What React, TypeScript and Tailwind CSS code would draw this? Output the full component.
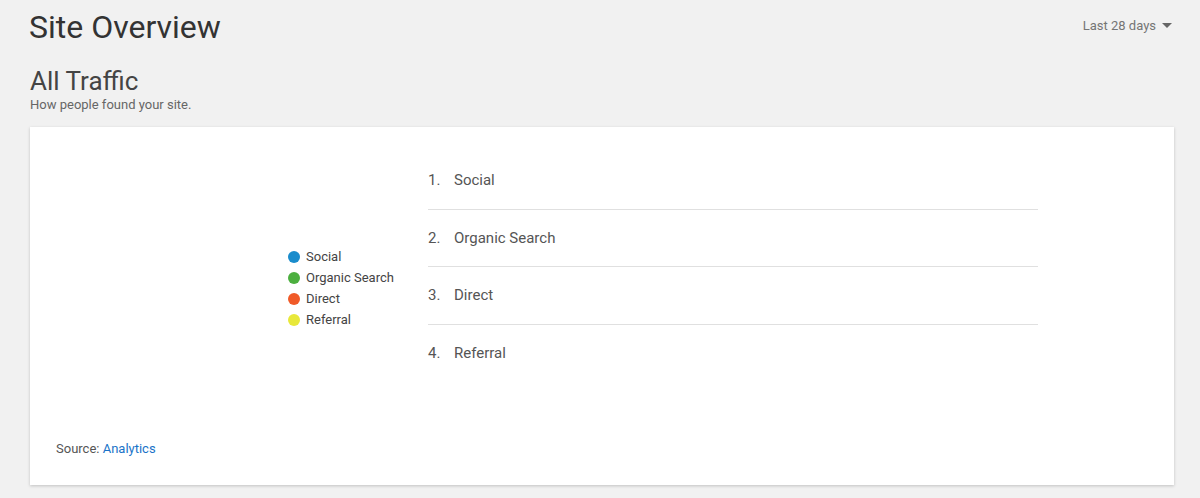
const legend = [
  { label: "Social", color: "bg-[#1a8ccc]" },
  { label: "Organic Search", color: "bg-[#4caf3f]" },
  { label: "Direct", color: "bg-[#f05a28]" },
  { label: "Referral", color: "bg-[#e8e83a]" },
];

export default function App() {
  return (
    <div className="h-[498px] w-[1200px] overflow-hidden bg-[#f1f1f1] font-[Roboto] text-[#444]">
      <header className="flex items-start justify-between pl-[29px] pr-[28px] pt-[7px]">
        <h1 className="text-[32px] leading-[40px] text-[#333]">Site Overview</h1>
        <button className="mt-[9px] flex items-center gap-[6px] text-[13px] text-[#757575]">
          Last 28 days
          <svg width="10" height="5" viewBox="0 0 10 5">
            <path d="M0 0h10L5 5z" fill="#666" />
          </svg>
        </button>
      </header>

      <section className="px-[30px] pt-[18px]">
        <h2 className="text-[26px] leading-[32px] text-[#444]">All Traffic</h2>
        <p className="text-[13px] leading-[16px] text-[#666]">How people found your site.</p>

        <div className="mt-[14px] flex h-[358px] w-[1144px] flex-col bg-white shadow-[0_1px_3px_rgba(0,0,0,0.2)]">
          <div className="flex items-start pl-[258px] pt-[25px]">
            <ul className="mt-[94px] w-[140px]">
              {legend.map((l) => (
                <li key={l.label} className="flex h-[21px] items-center gap-[6px] text-[13px] text-[#444]">
                  <span className={`h-[12px] w-[12px] rounded-full ${l.color}`} />
                  {l.label}
                </li>
              ))}
            </ul>
            <ol className="w-[610px]">
              {legend.map((l, i) => (
                <li
                  key={l.label}
                  className={`flex h-[57.5px] items-center text-[15px] text-[#555] ${i < 3 ? "border-b border-[#e0e0e0]" : ""}`}
                >
                  <span className="w-[26px]">{i + 1}.</span>
                  {l.label}
                </li>
              ))}
            </ol>
          </div>
          <p className="mt-auto pb-[27px] pl-[26px] text-[13px] text-[#555]">
            Source: <a className="text-[#1a73c8]">Analytics</a>
          </p>
        </div>
      </section>
    </div>
  );
}
